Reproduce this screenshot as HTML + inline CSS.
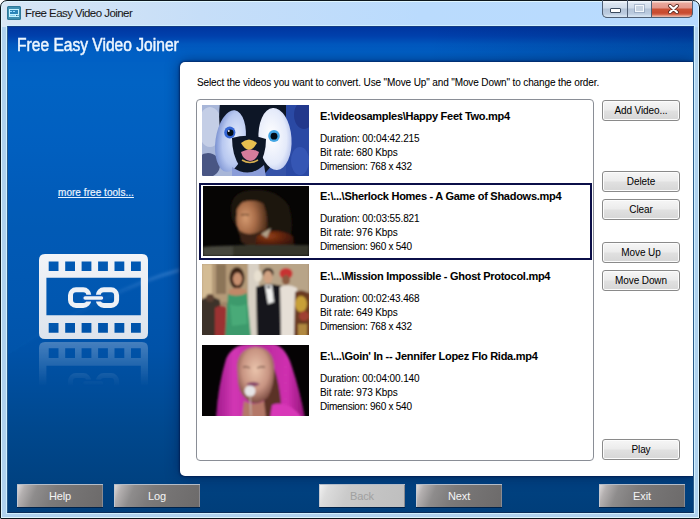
<!DOCTYPE html>
<html><head><meta charset="utf-8">
<style>
*{margin:0;padding:0;box-sizing:border-box}
html,body{width:700px;height:519px;overflow:hidden;background:#fff;font-family:"Liberation Sans",sans-serif}
.a{position:absolute}
#win{left:0;top:0;width:700px;height:519px;border:1px solid #0c161c;border-radius:7px 7px 1px 1px;
 background:linear-gradient(90deg,#d8e6f4 0,#c6def8 200px,#badbfd 420px,#b8dbff 100%) 0 0/100% 26px no-repeat,#b0d2ee;box-shadow:inset 0 0 0 1px #def5ff}
#fl{left:6px;top:25px;width:689px;height:489px;border:1px solid #d0f0ff}
#cv{left:7px;top:26px;width:687px;height:487px;overflow:hidden;border:1px solid #2a5a8a;border-top-color:#143c82;border-bottom-color:#0a2c58}
#bg{left:0;top:0;width:685px;height:485px;background:linear-gradient(#0036a0 0px,#0040ac 9px,#0056bc 17px,#005fc4 25px,#0062c4 56px,#005ebe 123px,#0058b4 201px,#0055ae 273px,#0052a8 321px,#00488e 401px,#004282 449px,#00407e 468px,#003e7a 485px)}
#panel{width:513px;height:414px;background:#fff;border-radius:5px 0 0 5px;box-shadow:0 0 2px 1px rgba(0,15,60,.55),0 0 14px 0 rgba(0,20,70,.6)}
.t{white-space:nowrap;color:#000;font-size:11px;letter-spacing:-0.55px;-webkit-text-stroke:0.06px #000}
.b{font-weight:bold;letter-spacing:-0.27px}
.btn{height:21px;width:78px;border:1px solid #8a8a8a;border-radius:3px;background:linear-gradient(#f6f6f6,#ececec 45%,#e0e0e0 55%,#d6d6d6);
 font-size:10px;letter-spacing:-0.1px;text-align:center;line-height:19px;color:#000;box-shadow:inset 0 0 0 1px #fcfcfc}
.bb{width:86px;height:23px;background:linear-gradient(112deg,#e4e0e0 0px,#b4b0b0 8px,#8e8c8c 20px,#7c7a7a 38px,#767474 60%,#6c6a6a 100%);color:#f4f4f4;font-size:11px;text-align:center;line-height:25px;letter-spacing:-0.1px;box-shadow:inset 0 1px 0 #b4bcc8,inset 1px 0 0 #c4c8d0,inset -1px 0 0 #8a8a90,0 1px 0 rgba(0,15,40,.6)}
.thumb{left:202px;width:107px;height:71px;overflow:hidden}
</style></head><body>
<div id="win" class="a"></div>
<div id="fl" class="a"></div>
<!-- title icon -->
<svg class="a" style="left:7px;top:6px" width="14" height="14" viewBox="0 0 14 14">
 <rect x="0" y="0" width="14" height="14" rx="1.5" fill="#3f8fb0"/>
 <rect x="0.5" y="0.5" width="13" height="13" rx="1.5" fill="none" stroke="#2e7898" stroke-width="1"/>
 <rect x="2" y="3" width="10" height="8" fill="#c4f2ff"/>
 <rect x="3" y="4" width="8" height="4" fill="#2c86b8"/>
 <rect x="3" y="5" width="2" height="1" fill="#9adcff"/><rect x="6" y="5" width="2" height="1" fill="#9adcff"/>
 <rect x="3" y="9" width="5" height="1" fill="#8ad0ee"/><rect x="9" y="9" width="1" height="1" fill="#2c6a90"/><rect x="10.5" y="9" width="1" height="1" fill="#2c6a90"/>
</svg>
<div class="a t" style="left:25px;top:7px;font-size:11.5px;letter-spacing:-0.55px;color:#1a1a1a">Free Easy Video Joiner</div>
<!-- window buttons -->
<div class="a" style="left:602px;top:0;width:91px;height:18px;border:1px solid #4e5e74;border-top:none;border-radius:0 0 5px 5px;overflow:hidden;background:#1a2028">
  <div class="a" style="left:0;top:1px;width:24px;height:16px;background:linear-gradient(#f0f6fc 0,#f0f6fc 1px,#dce6f2 2px,#d0dcea 7px,#b4c4d8 8px,#bccce0 13px,#d4e2f0 15px)"></div>
  <div class="a" style="left:24px;top:0;width:1px;height:17px;background:#4e5e74"></div>
  <div class="a" style="left:25px;top:1px;width:23px;height:16px;background:linear-gradient(#f0f6fc 0,#f0f6fc 1px,#dce6f2 2px,#d0dcea 7px,#b4c4d8 8px,#bccce0 13px,#d4e2f0 15px)"></div>
  <div class="a" style="left:48px;top:0;width:1px;height:17px;background:#4e5e74"></div>
  <div class="a" style="left:49px;top:1px;width:42px;height:16px;background:linear-gradient(#f8e0d8 0,#f8e0d8 1px,#eaa89c 2px,#e2968a 7px,#cc5236 8px,#c84a30 12px,#d87058 14px,#eab0a0 15px)"></div>
  <div class="a" style="left:7px;top:8px;width:11px;height:5px;background:#fff;border:1px solid #3a4a5e;border-radius:1px"></div>
  <div class="a" style="left:32px;top:5px;width:9px;height:7px;border:1px solid #f4f8fc;background:#c8d4e2;box-shadow:0 0 0 1px rgba(110,130,160,.4)"></div>
  <svg class="a" style="left:65px;top:4px" width="11" height="10" viewBox="0 0 11 10"><path d="M2 1.8 L9 8.2 M9 1.8 L2 8.2" stroke="#5a2a24" stroke-width="3.8" stroke-linecap="round"/><path d="M2 1.8 L9 8.2 M9 1.8 L2 8.2" stroke="#fff" stroke-width="2.2" stroke-linecap="round"/></svg>
</div>
<div id="cv" class="a"><div id="bg" class="a"></div><svg class="a" style="left:0;top:0" width="685" height="485"><defs><filter id="bl"><feGaussianBlur stdDeviation="1.5"/></filter><linearGradient id="arcg" x1="0" y1="0" x2="1" y2="0"><stop offset="0" stop-color="#9cc8ff" stop-opacity="0"/><stop offset="0.55" stop-color="#9cc8ff" stop-opacity="0.05"/><stop offset="1" stop-color="#9cc8ff" stop-opacity="0.3"/></linearGradient></defs><path d="M0 35 H172 V243 Q100 262 0 328 Z" fill="#1070d0" fill-opacity="0.08"/><path d="M172 243 Q100 262 0 328" fill="none" stroke="url(#arcg)" stroke-width="3" filter="url(#bl)"/></svg><div class="a" style="left:0;top:0;width:685px;height:35px;background:linear-gradient(90deg,rgba(0,20,70,0) 0,rgba(0,20,70,0) 420px,rgba(0,20,70,.22) 685px)"></div><div id="panel" class="a" style="left:172px;top:35px"></div></div>
<div class="a t" style="left:17px;top:35px;font-size:18px;letter-spacing:0;color:#eef6ff;transform:scaleX(0.866);transform-origin:0 0;-webkit-text-stroke:0.5px #eaf4ff">Free Easy Video Joiner</div>

<!-- sidebar link -->
<div class="a t" style="left:58px;top:187px;font-size:10px;color:#eaf4ff;text-decoration:underline;letter-spacing:0.05px;-webkit-text-stroke:0.2px #eaf4ff">more free tools...</div>

<!-- logo -->
<svg class="a" style="left:39px;top:254px" width="110" height="140" viewBox="0 0 110 140">
  <defs>
    <linearGradient id="lg" x1="0" y1="0" x2="0" y2="1"><stop offset="0" stop-color="#f2f4f8"/><stop offset="1" stop-color="#dde3ec"/></linearGradient>
    <linearGradient id="rf" x1="0" y1="0" x2="0" y2="1"><stop offset="0" stop-color="#fff" stop-opacity="0.32"/><stop offset="0.85" stop-color="#fff" stop-opacity="0"/></linearGradient>
    <mask id="m1"><rect x="0" y="87" width="110" height="53" fill="url(#rf)"/></mask>
  </defs>
  <g id="film">
  <path fill="url(#lg)" fill-rule="evenodd" d="M6 0 H103 Q109 0 109 6 V79 Q109 85 103 85 H6 Q0 85 0 79 V6 Q0 0 6 0 Z M7.4 23.8 H101.8 V61.3 H7.4 Z M9.7 7.5h9.8v9.6h-9.8z M26.2 7.5h9.8v9.6h-9.8z M42.6 7.5h9.8v9.6h-9.8z M59.1 7.5h9.8v9.6h-9.8z M75.5 7.5h9.8v9.6h-9.8z M92.0 7.5h9.8v9.6h-9.8z M9.7 69h9.8v9.7h-9.8z M26.2 69h9.8v9.7h-9.8z M42.6 69h9.8v9.7h-9.8z M59.1 69h9.8v9.7h-9.8z M75.5 69h9.8v9.7h-9.8z M92.0 69h9.8v9.7h-9.8z "/>
  <rect x="31.5" y="35.8" width="18.3" height="15.6" rx="5.5" fill="none" stroke="#eef1f6" stroke-width="5"/>
  <rect x="59.3" y="35.8" width="18.3" height="15.6" rx="5.5" fill="none" stroke="#eef1f6" stroke-width="5"/>
  <rect x="43.6" y="41.5" width="21.4" height="5.1" rx="2.5" fill="#eef1f6" stroke="#0a58b8" stroke-width="1.6"/>
  </g>
  <g mask="url(#m1)"><use href="#film" transform="translate(0,173) scale(1,-1)"/></g>
</svg>

<!-- panel content -->
<div class="a t" style="left:197px;top:77px;font-size:10px;letter-spacing:-0.12px">Select the videos you want to convert. Use "Move Up" and "Move Down" to change the order.</div>
<div class="a" style="left:196px;top:99px;width:398px;height:362px;border:1px solid #8a8e96;border-radius:4px"></div>
<div class="a" style="left:199px;top:183px;width:393px;height:77px;border:2px solid #0b0f48"></div>

<!-- items -->
<div class="a thumb" style="top:105px;background:#6c86c8">
<svg width="107" height="71" viewBox="0 0 107 71">
 <defs>
  <filter id="f1" x="-20%" y="-20%" width="140%" height="140%"><feGaussianBlur stdDeviation="1.2"/></filter>
  <filter id="f0"><feGaussianBlur stdDeviation="0.6"/></filter>
  <radialGradient id="lpatch" cx="0.65" cy="0.45" r="0.7"><stop offset="0" stop-color="#e4ecfc"/><stop offset="0.6" stop-color="#b8c8f0"/><stop offset="1" stop-color="#7088cc"/></radialGradient>
  <radialGradient id="rpatch" cx="0.4" cy="0.45" r="0.7"><stop offset="0" stop-color="#ffffff"/><stop offset="0.65" stop-color="#e4eafa"/><stop offset="1" stop-color="#a8b8e8"/></radialGradient>
 </defs>
 <g filter="url(#f0)">
 <rect width="107" height="71" fill="#3452a8"/>
 <rect x="-2" y="-2" width="34" height="75" fill="#a8b6d8"/>
 <ellipse cx="8" cy="22" rx="12" ry="20" fill="#c4cee6"/>
 <ellipse cx="6" cy="60" rx="12" ry="12" fill="#4a5684"/>
 <rect x="84" y="-2" width="25" height="75" fill="#2c4aa4"/>
 <ellipse cx="102" cy="10" rx="10" ry="14" fill="#22388c"/>
 <ellipse cx="98" cy="56" rx="9" ry="14" fill="#3656b4"/>
 <path d="M18 -2 H84 V20 Q80 40 70 60 L60 72 H40 L28 60 Q14 30 18 -2 Z" fill="#0e1628"/>
 <ellipse cx="28.5" cy="36" rx="15" ry="31" fill="url(#lpatch)" transform="rotate(8 28 36)"/>
 <ellipse cx="73" cy="34" rx="16.5" ry="31" fill="url(#rpatch)" transform="rotate(-4 73 34)"/>
 <path d="M30 33 Q47 28 64 34 Q64 50 56 62 Q47 68 38 62 Q30 50 30 33 Z" fill="#0e1628"/>
 <path d="M30 62 Q47 74 62 60 L64 72 H30 Z" fill="#8a9cd8"/>
 <ellipse cx="27.8" cy="27.5" rx="5.6" ry="6" fill="#3466d4"/><circle cx="28.3" cy="27.8" r="3.2" fill="#060814"/><circle cx="26.8" cy="26" r="0.9" fill="#fff"/>
 <ellipse cx="72" cy="31" rx="5.8" ry="6" fill="#42a6e4"/><circle cx="72" cy="31.2" r="3.4" fill="#060814"/>
 <path d="M39 38 Q47 31 55 38 Q51 45 47 45 Q43 45 39 38 Z" fill="#e8c050"/>
 <path d="M39 47 Q48 42 57 47 Q55 55 48 56 Q41 55 39 47 Z" fill="#d67c9c"/>
 <path d="M40 55 Q48 60 56 55" fill="none" stroke="#d8b050" stroke-width="1.5"/>
 </g>
</svg></div>
<div class="a t b" style="left:320px;top:110px">E:\videosamples\Happy Feet Two.mp4</div>
<div class="a t" style="left:320px;top:133px;font-size:10px;letter-spacing:-0.1px">Duration: 00:04:42.215</div>
<div class="a t" style="left:320px;top:147px;font-size:10px;letter-spacing:-0.1px">Bit rate: 680 Kbps</div>
<div class="a t" style="left:320px;top:161px;font-size:10px;letter-spacing:-0.25px">Dimension: 768 x 432</div>

<div class="a thumb" style="top:186px;left:203px;width:106px;height:70px;background:#050505">
<svg width="106" height="70" viewBox="0 0 106 70">
 <defs>
  <filter id="f2" x="-30%" y="-30%" width="160%" height="160%"><feGaussianBlur stdDeviation="0.8"/></filter>
  <radialGradient id="face2" cx="0.3" cy="0.45" r="0.8"><stop offset="0" stop-color="#d49a70"/><stop offset="0.4" stop-color="#a86c48"/><stop offset="0.8" stop-color="#5a3620"/><stop offset="1" stop-color="#2a180e"/></radialGradient>
  <radialGradient id="coat2" cx="0.35" cy="0.3" r="0.75"><stop offset="0" stop-color="#944018"/><stop offset="0.5" stop-color="#5e220a"/><stop offset="1" stop-color="#2a1006"/></radialGradient>
 </defs>
 <rect width="106" height="70" fill="#060504"/>
 <g filter="url(#f2)">
 <path d="M28 26 Q26 6 48 4 Q74 2 86 20 Q92 40 86 56 L62 56 L38 44 Q28 38 28 26 Z" fill="#1e130c"/>
 <path d="M34 16 Q44 8 58 12 Q66 28 64 44 Q60 58 48 58 Q38 56 36 46 Q32 36 34 28 Q33 22 34 16 Z" fill="url(#face2)"/>
 <path d="M30 18 Q36 6 52 6 Q62 8 64 20 Q54 12 40 16 Q34 20 32 30 Z" fill="#1e130c"/>
 <path d="M38 29 Q42 28 46 29" stroke="#4a2c1a" stroke-width="1.2" fill="none"/>
 <path d="M36 44 Q46 52 60 44 L58 58 Q46 62 38 56 Z" fill="#3a2416"/>
 <path d="M54 50 Q72 40 90 50 L92 62 L52 62 Z" fill="url(#coat2)"/>
 <path d="M58 48 L68 42 L64 52 Z" fill="#b0a088"/>
 <path d="M0 61 Q40 58 106 59 L106 70 L0 70 Z" fill="#34342c"/>
 <path d="M0 61 Q20 60 30 60 L30 70 L0 70 Z" fill="#46463c"/>
 </g>
</svg></div>
<div class="a t b" style="left:320px;top:190px">E:\...\Sherlock Homes - A Game of Shadows.mp4</div>
<div class="a t" style="left:320px;top:213px;font-size:10px;letter-spacing:-0.1px">Duration: 00:03:55.821</div>
<div class="a t" style="left:320px;top:227px;font-size:10px;letter-spacing:-0.1px">Bit rate: 976 Kbps</div>
<div class="a t" style="left:320px;top:241px;font-size:10px;letter-spacing:-0.25px">Dimension: 960 x 540</div>

<div class="a thumb" style="top:264px;height:71px">
<svg width="107" height="71" viewBox="0 0 107 71">
 <defs><filter id="f3" x="-10%" y="-10%" width="120%" height="120%"><feGaussianBlur stdDeviation="0.9"/></filter></defs>
 <rect width="107" height="71" fill="#a08468"/>
 <g filter="url(#f3)">
 <rect x="-2" y="-2" width="50" height="40" fill="#b49a78"/>
 <rect x="0" y="0" width="10" height="40" fill="#d4bc94"/>
 <rect x="14" y="0" width="10" height="30" fill="#8c7458"/>
 <rect x="46" y="-2" width="12" height="75" fill="#d8d0c4"/>
 <rect x="57" y="-2" width="50" height="30" fill="#b8a488"/>
 <ellipse cx="56" cy="12" rx="4" ry="6" fill="#e8e0d0"/>
 <path d="M-2 36 Q8 30 18 36 L18 73 L-2 73 Z" fill="#3c302c"/>
 <ellipse cx="8" cy="34" rx="4" ry="4" fill="#5a4030"/>
 <path d="M13 44 Q18 40 24 44 L24 73 L13 73 Z" fill="#9c3030"/>
 <ellipse cx="35" cy="14" rx="7.5" ry="11" fill="#3a2418"/>
 <ellipse cx="35.5" cy="15" rx="4.5" ry="6.5" fill="#c89070"/>
 <path d="M27 26 Q35 22 44 26 L46 34 L26 34 Z" fill="#c08868"/>
 <path d="M26 30 Q35 34 45 29 L49 73 L23 73 Z" fill="#3c9a6c"/>
 <path d="M28 40 Q36 44 44 40 L45 60 L30 62 Z" fill="#48aa78"/>
 <ellipse cx="66" cy="9" rx="5.5" ry="5" fill="#2a1c16"/>
 <ellipse cx="66" cy="13" rx="4.5" ry="6.5" fill="#d0a282"/>
 <path d="M54 23 Q66 18 80 22 L84 73 L55 73 Z" fill="#18181e"/>
 <path d="M63 21 L70 21 L72 38 L66 40 Z" fill="#f0f0ee"/>
 <path d="M64 22 L69 22 L67 25 Z" fill="#101014"/>
 <ellipse cx="84" cy="9.5" rx="6.5" ry="5.5" fill="#c83232"/>
 <ellipse cx="84" cy="16" rx="4" ry="5" fill="#8a5a40"/>
 <path d="M78 23 Q86 19 95 24 L96 73 L79 73 Z" fill="#e6dfd6"/>
 <path d="M93 28 Q100 24 108 30 L108 73 L92 73 Z" fill="#6a3a20"/>
 <ellipse cx="99" cy="40" rx="6" ry="8" fill="#c8a038"/>
 <ellipse cx="102" cy="52" rx="5" ry="5" fill="#a04030"/>
 <rect x="96" y="60" width="9" height="13" fill="#b08840"/>
 </g>
</svg></div>
<div class="a t b" style="left:320px;top:270px">E:\...\Mission Impossible - Ghost Protocol.mp4</div>
<div class="a t" style="left:320px;top:293px;font-size:10px;letter-spacing:-0.1px">Duration: 00:02:43.468</div>
<div class="a t" style="left:320px;top:307px;font-size:10px;letter-spacing:-0.1px">Bit rate: 649 Kbps</div>
<div class="a t" style="left:320px;top:321px;font-size:10px;letter-spacing:-0.25px">Dimension: 768 x 432</div>

<div class="a thumb" style="top:345px">
<svg width="107" height="71" viewBox="0 0 107 71">
 <defs>
  <filter id="f4" x="-10%" y="-10%" width="120%" height="120%"><feGaussianBlur stdDeviation="0.9"/></filter>
  <radialGradient id="face4" cx="0.5" cy="0.4" r="0.6"><stop offset="0" stop-color="#eac4ac"/><stop offset="0.6" stop-color="#c89482"/><stop offset="1" stop-color="#7a4a40"/></radialGradient>
  <linearGradient id="hood4" x1="0" y1="0" x2="1" y2="0"><stop offset="0" stop-color="#a01c8c"/><stop offset="0.2" stop-color="#d236b4"/><stop offset="0.5" stop-color="#b82a9c"/><stop offset="0.8" stop-color="#d030b0"/><stop offset="1" stop-color="#901478"/></linearGradient>
 </defs>
 <rect width="107" height="71" fill="#050304"/>
 <g filter="url(#f4)">
 <path d="M14 73 Q16 40 24 14 Q30 0 46 -1 L72 -1 Q84 2 90 22 Q98 46 103 73 Z" fill="url(#hood4)"/>
 <path d="M62 10 Q78 20 80 73 L62 73 Z" fill="#5a3028"/>
 <path d="M35 20 Q37 3 54 2 Q70 3 72 20 Q73 40 66 52 Q58 60 50 58 Q38 52 36 38 Z" fill="url(#face4)"/>
 <path d="M42 56 Q52 62 62 56 L64 73 L40 73 Z" fill="#b47868"/>
 <path d="M44 39 Q51 35 58 39 Q51 44 44 39 Z" fill="#8a4a6a"/>
 <path d="M41 22 Q45 21 48 23 M55 23 Q59 21 63 22" stroke="#5a3a30" stroke-width="1" fill="none"/>
 <circle cx="48" cy="46" r="5.5" fill="#e6e4e6"/>
 <path d="M48 50 L49 71" stroke="#c8c0b8" stroke-width="1"/>
 <path d="M70 60 Q86 54 100 73 L68 73 Z" fill="#d838b8"/>
 </g>
</svg></div>
<div class="a t b" style="left:320px;top:350px">E:\...\Goin' In -- Jennifer Lopez Flo Rida.mp4</div>
<div class="a t" style="left:320px;top:373px;font-size:10px;letter-spacing:-0.1px">Duration: 00:04:00.140</div>
<div class="a t" style="left:320px;top:387px;font-size:10px;letter-spacing:-0.1px">Bit rate: 973 Kbps</div>
<div class="a t" style="left:320px;top:401px;font-size:10px;letter-spacing:-0.25px">Dimension: 960 x 540</div>

<!-- right buttons -->
<div class="a btn" style="left:602px;top:100px">Add Video...</div>
<div class="a btn" style="left:602px;top:171px">Delete</div>
<div class="a btn" style="left:602px;top:199px">Clear</div>
<div class="a btn" style="left:602px;top:242px">Move Up</div>
<div class="a btn" style="left:602px;top:270px">Move Down</div>
<div class="a btn" style="left:602px;top:439px">Play</div>

<!-- bottom buttons -->
<div class="a bb" style="left:17px;top:484px">Help</div>
<div class="a bb" style="left:114px;top:484px">Log</div>
<div class="a bb" style="left:319px;top:484px;background:linear-gradient(112deg,#f4f4f4 0px,#dcdcdc 10px,#cacaca 30px,#c4c4c4 60%,#bebebe 100%);color:#a0a0a0">Back</div>
<div class="a bb" style="left:416px;top:484px">Next</div>
<div class="a bb" style="left:599px;top:484px">Exit</div>
</body></html>
